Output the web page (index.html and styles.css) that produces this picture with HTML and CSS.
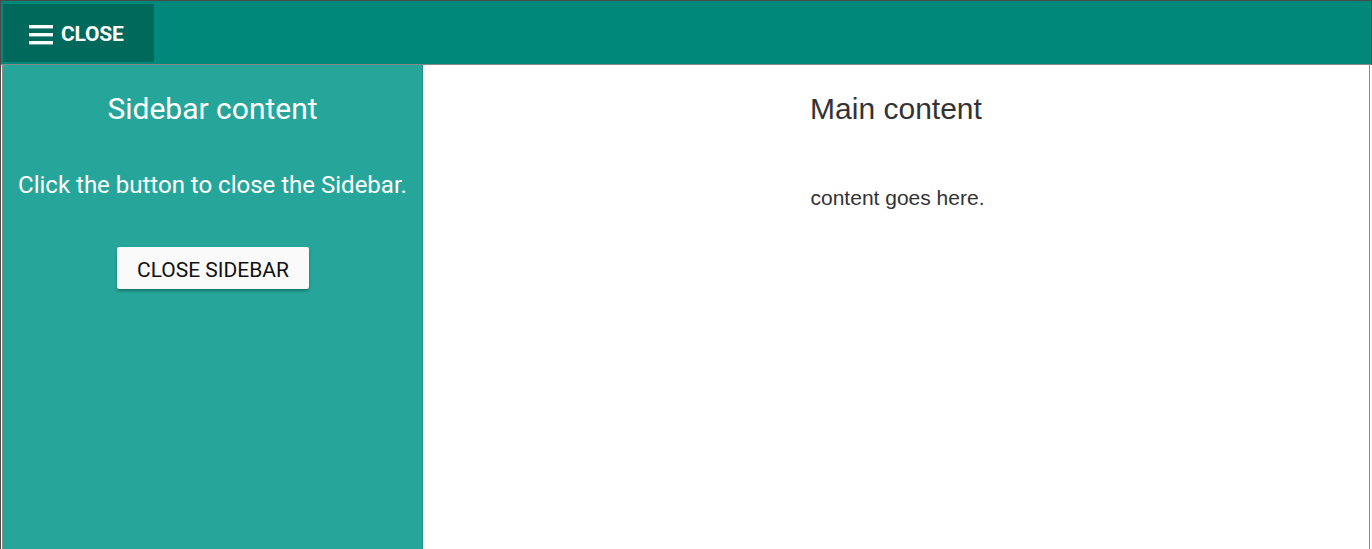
FILE: index.html
```html
<!DOCTYPE html>
<html>
<head>
<meta charset="utf-8">
<link rel="stylesheet" href="styles.css">
</head>
<body>
<div class="page">
  <header class="topbar">
    <button class="toggle">
      <svg class="burger" width="24" height="21" viewBox="0 0 24 21">
        <rect x="0" y="1" width="24" height="3.4" fill="#fff"/>
        <rect x="0" y="9" width="24" height="3.4" fill="#fff"/>
        <rect x="0" y="17" width="24" height="3.4" fill="#fff"/>
      </svg>
      <span>CLOSE</span>
    </button>
  </header>
  <div class="body">
    <aside class="sidebar">
      <h2 class="side-title">Sidebar content</h2>
      <p class="side-text">Click the button to close the Sidebar.</p>
      <button class="close-btn">CLOSE SIDEBAR</button>
    </aside>
    <main class="main">
      <h2 class="main-title">Main content</h2>
      <p class="main-text">content goes here.</p>
    </main>
  </div>
</div>
</body>
</html>
```

FILE: styles.css
```css
html, body {
  margin: 0;
  padding: 0;
  height: 100%;
  background: #fff;
}
.page {
  height: 100%;
  display: flex;
  flex-direction: column;
  border-top: 1px solid #4a4a4a;
  border-left: 1px solid #4a4a4a;
  box-sizing: border-box;
}
.topbar {
  height: 64px;
  background: #00897b;
  border-bottom: 1px solid #8a8a8a;
  border-right: 1px solid #4a4a4a;
  padding: 3px 0 0 2px;
  box-sizing: border-box;
  display: flex;
  flex-shrink: 0;
}
.toggle {
  width: 151px;
  height: 58px;
  background: #00695c;
  border: none;
  padding: 2px 0 0 26px;
  margin: 0;
  display: flex;
  align-items: center;
  gap: 8px;
  color: #fff;
  font-family: Roboto, "Noto Sans", sans-serif;
  font-weight: 700;
  font-size: 21px;
  cursor: pointer;
}
.toggle span {
  letter-spacing: -0.2px;
}
.burger {
  display: block;
}
.body {
  flex: 1;
  display: flex;
  padding-left: 1px;
  padding-right: 2px;
  min-height: 0;
}
.sidebar {
  width: 421px;
  box-sizing: border-box;
  background: #26a69a;
  border-left: 1px solid #8a8a8a;
  border-right: 1px solid #1f9185;
  display: flex;
  flex-direction: column;
  align-items: center;
  font-family: Roboto, "Noto Sans", sans-serif;
  color: #fff;
}
.side-title {
  margin: 26px 0 0;
  font-size: 30px;
  font-weight: 400;
  line-height: 36px;
}
.side-text {
  margin: 42px 0 0;
  font-size: 24px;
  line-height: 33px;
}
.close-btn {
  margin-top: 45px;
  width: 192px;
  height: 42px;
  background: #fafafa;
  border: none;
  border-radius: 2px;
  box-shadow: 0 2px 3px rgba(0,0,0,0.3);
  font-family: Roboto, "Noto Sans", sans-serif;
  font-size: 21px;
  color: #111;
  padding: 3px 0 0 1px;
}
.main {
  flex: 1;
  border-right: 1px solid #8a8a8a;
  display: flex;
  flex-direction: column;
  align-items: center;
  font-family: "Liberation Sans", Arial, sans-serif;
  color: #333;
}
.main-title {
  margin: 26px 0 0;
  font-size: 30px;
  font-weight: 400;
  line-height: 36px;
}
.main-text {
  margin: 59px 0 0;
  font-size: 21px;
  line-height: 24px;
  padding-left: 3px;
}
```
